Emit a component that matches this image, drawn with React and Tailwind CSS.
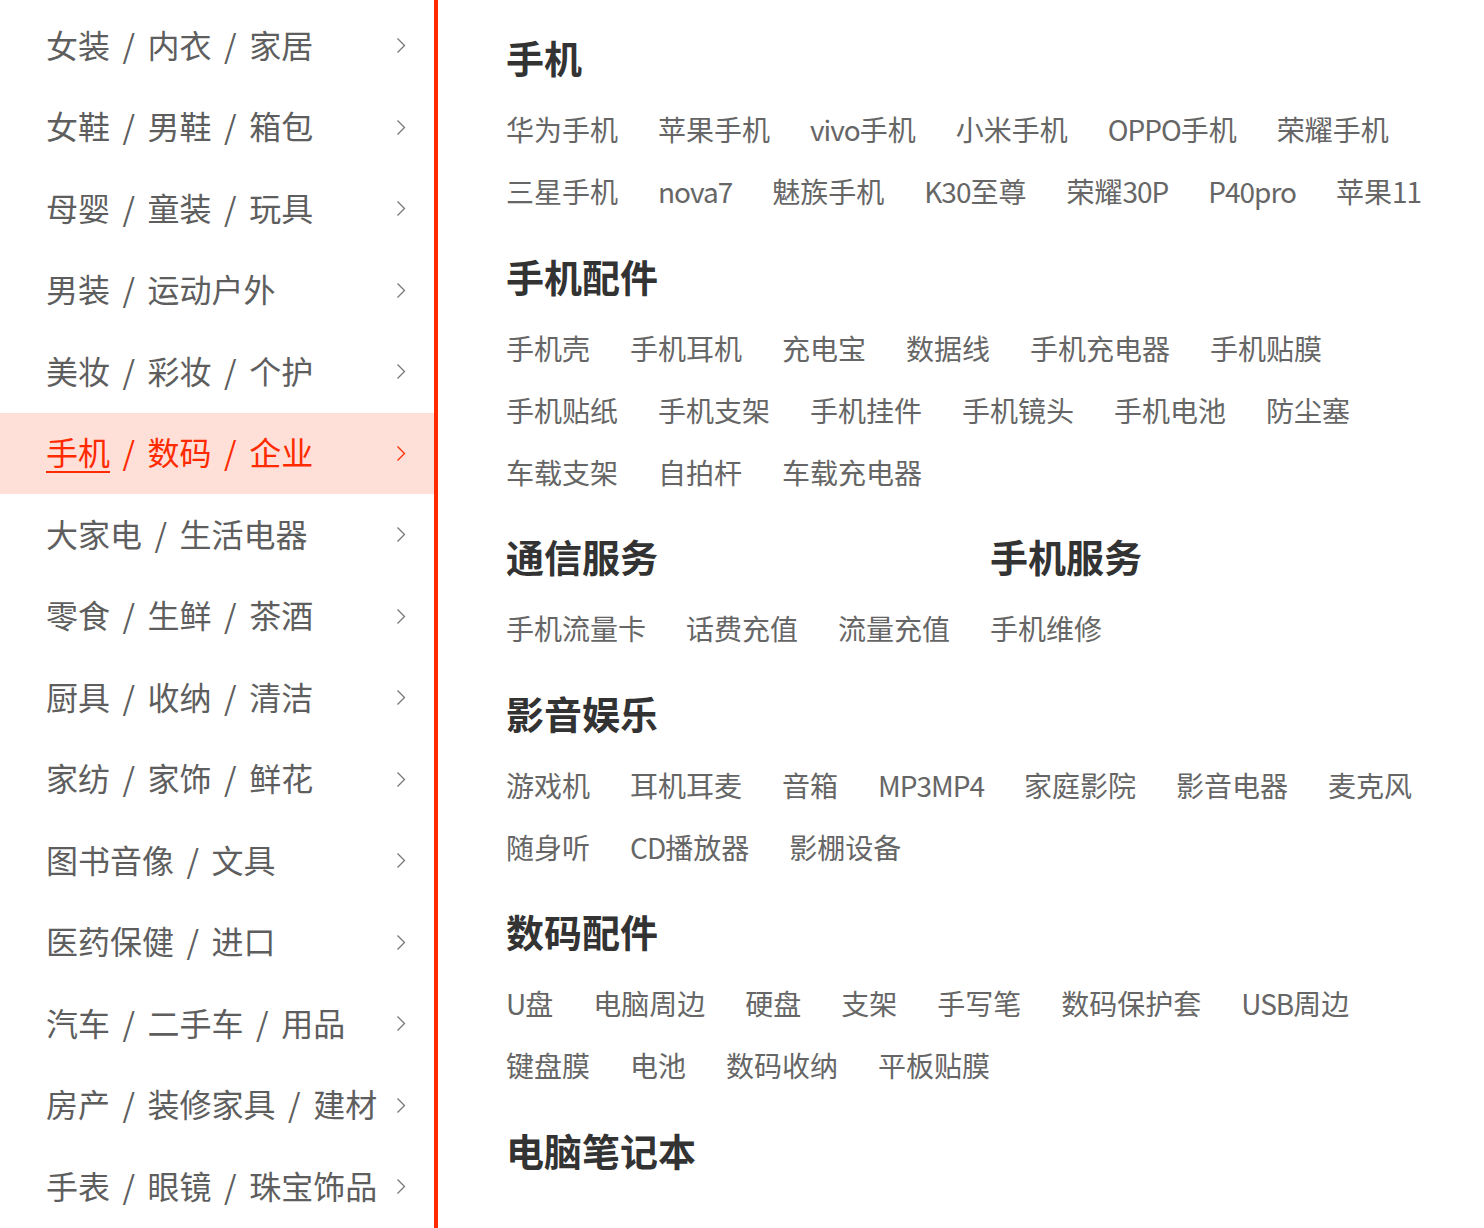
import React from "react";

const categories = [
  ["女装", "内衣", "家居"],
  ["女鞋", "男鞋", "箱包"],
  ["母婴", "童装", "玩具"],
  ["男装", "运动户外"],
  ["美妆", "彩妆", "个护"],
  ["手机", "数码", "企业"],
  ["大家电", "生活电器"],
  ["零食", "生鲜", "茶酒"],
  ["厨具", "收纳", "清洁"],
  ["家纺", "家饰", "鲜花"],
  ["图书音像", "文具"],
  ["医药保健", "进口"],
  ["汽车", "二手车", "用品"],
  ["房产", "装修家具", "建材"],
  ["手表", "眼镜", "珠宝饰品"],
];

const ACTIVE = 5;

function Chevron() {
  return (
    <svg width="10" height="17" viewBox="0 0 10 17" fill="none" className="shrink-0">
      <path d="M1.5 1.5l7 7-7 7" stroke="currentColor" strokeWidth="1.3" />
    </svg>
  );
}

function Sidebar() {
  return (
    <div className="w-[438px] shrink-0 border-r-4 border-[#ff2a00] pt-[5px]">
      {categories.map((parts, i) => {
        const active = i === ACTIVE;
        return (
          <div
            key={i}
            className={
              "flex h-[81.5px] items-center justify-between pl-[46px] pr-[28px] text-[32px] " +
              (active ? "bg-[#fee0d8] text-[#ff2a00]" : "text-[#5e5e5e]")
            }
          >
            <span className="whitespace-nowrap pb-[4px]">
              {parts.map((p, j) => (
                <React.Fragment key={j}>
                  {j > 0 && <span className="mx-[12.5px]">/</span>}
                  <span
                    className={
                      active && j === 0
                        ? "underline decoration-2 underline-offset-[6px]"
                        : ""
                    }
                  >
                    {p}
                  </span>
                </React.Fragment>
              ))}
            </span>
            <span className={active ? "text-[#ff2a00]" : "text-[#777]"}>
              <Chevron />
            </span>
          </div>
        );
      })}
    </div>
  );
}

// latin runs in the links are set a touch tighter than the CJK
function LinkText({ text }) {
  const parts = text.split(/([A-Za-z0-9]+)/).filter(Boolean);
  return parts.map((p, i) =>
    /^[A-Za-z0-9]+$/.test(p) ? (
      <span key={i} className="tracking-[-1px]">
        {p}
      </span>
    ) : (
      <React.Fragment key={i}>{p}</React.Fragment>
    )
  );
}

function Section({ title, links, className = "" }) {
  return (
    <div className={"mb-[28.5px] " + className}>
      <h3 className="text-[38px] font-bold leading-[50px] text-[#333]">{title}</h3>
      <div className="mt-[16px] flex flex-wrap gap-x-[40px]">
        {links.map((l) => (
          <a key={l} href="#" className="whitespace-nowrap text-[28px] leading-[62px] text-[#666]">
            <LinkText text={l} />
          </a>
        ))}
      </div>
    </div>
  );
}

export default function App() {
  return (
    <div
      className="flex h-[1228px] overflow-hidden bg-white"
      style={{ fontFamily: '"Noto Sans CJK SC", "Noto Sans", sans-serif' }}
    >
      <Sidebar />
      <div className="w-[1018px] pl-[68px] pt-[32px]">
        <Section
          title="手机"
          links={["华为手机", "苹果手机", "vivo手机", "小米手机", "OPPO手机", "荣耀手机", "三星手机", "nova7", "魅族手机", "K30至尊", "荣耀30P", "P40pro", "苹果11"]}
        />
        <Section
          title="手机配件"
          links={["手机壳", "手机耳机", "充电宝", "数据线", "手机充电器", "手机贴膜", "手机贴纸", "手机支架", "手机挂件", "手机镜头", "手机电池", "防尘塞", "车载支架", "自拍杆", "车载充电器"]}
        />
        <div className="flex">
          <Section className="w-[484px]" title="通信服务" links={["手机流量卡", "话费充值", "流量充值"]} />
          <Section title="手机服务" links={["手机维修"]} />
        </div>
        <Section
          title="影音娱乐"
          links={["游戏机", "耳机耳麦", "音箱", "MP3MP4", "家庭影院", "影音电器", "麦克风", "随身听", "CD播放器", "影棚设备"]}
        />
        <Section
          title="数码配件"
          links={["U盘", "电脑周边", "硬盘", "支架", "手写笔", "数码保护套", "USB周边", "键盘膜", "电池", "数码收纳", "平板贴膜"]}
        />
        <Section title="电脑笔记本" links={[]} />
      </div>
    </div>
  );
}
